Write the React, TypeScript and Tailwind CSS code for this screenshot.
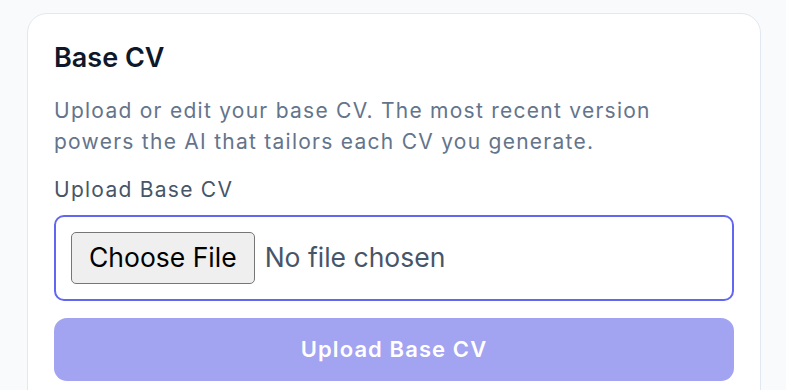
export default function App() {
  return (
    <div className="min-h-screen bg-[#f8fafc] pl-[27px] pr-[25px] pt-[13px] font-['Inter',sans-serif]">
      {/* Card */}
      <div className="rounded-[20px] border border-[#e2e8f0] bg-white px-[26px] pt-[26px] pb-10">
        <h2 className="text-[27px] font-semibold leading-[36px] text-[#0f172a]">Base CV</h2>
        <p className="mt-[19px] text-[21px] leading-[31px] tracking-[0.06em] text-[#64748b]">
          Upload or edit your base CV. The most recent version powers the AI that tailors each CV you generate.
        </p>

        <label className="mt-[17px] block text-[21px] leading-[31px] tracking-[0.06em] text-[#475569]">
          Upload Base CV
        </label>
        <div className="mt-[10px] flex h-[86px] items-center rounded-[10px] border-2 border-[#6366f1] px-[15px]">
          <input
            type="file"
            className="w-full text-[26.5px] text-[#475569] file:mr-[10px] file:h-[52px] file:cursor-pointer file:rounded-[5px] file:border file:border-[#767676] file:bg-[#efefef] file:px-[17px] file:text-[26.5px] file:text-black"
          />
        </div>

        <button
          disabled
          className="mt-[17px] flex h-[63px] w-full items-center justify-center rounded-[13px] bg-[#a2a3f1] text-[22px] font-semibold tracking-[0.05em] text-white"
        >
          Upload Base CV
        </button>
      </div>
    </div>
  )
}
